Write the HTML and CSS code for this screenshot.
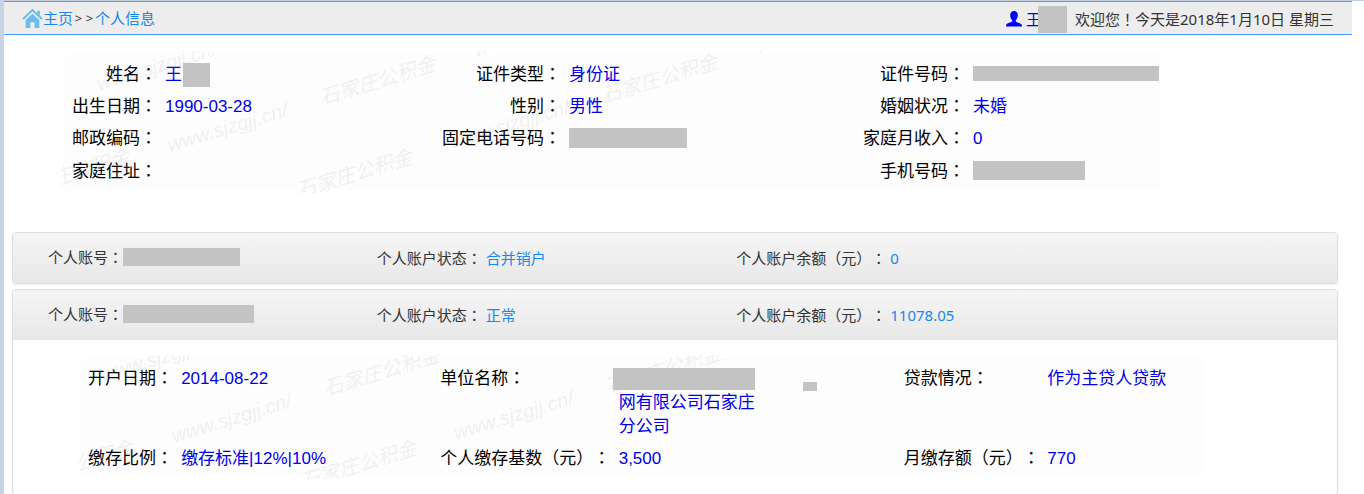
FILE: index.html
```html
<!DOCTYPE html>
<html lang="zh-CN">
<head>
    <meta charset="UTF-8">
    <meta name="viewport" content="width=device-width, initial-scale=1.0">
    <title>个人信息</title>
    <link rel="stylesheet" href="styles.css">
</head>
<body>
    <!-- watermark shared by both info tables -->
    <svg class="defs" width="0" height="0" aria-hidden="true">
        <symbol id="watermark" overflow="visible">
            <text transform="translate(38 40) rotate(-17)">www.sjzgjj.cn/</text>
            <text transform="translate(109 101) rotate(-17)">www.sjzgjj.cn/</text>
            <text transform="translate(261 54) rotate(-17)">石家庄公积金</text>
            <text transform="translate(-45 147) rotate(-17)">石家庄公积金</text>
            <text transform="translate(238 147) rotate(-17)">石家庄公积金</text>
            <text transform="translate(415 6) rotate(-17)">www.sjzgjj.cn/</text>
            <text transform="translate(391 98) rotate(-17)">www.sjzgjj.cn/</text>
            <text transform="translate(543 52) rotate(-17)">石家庄公积金</text>
            <text transform="translate(697 3) rotate(-17)">www.sjzgjj.cn/</text>
        </symbol>
    </svg>

    <div class="page">
        <header class="topbar">
            <nav class="crumbs">
                <svg class="icon-home" viewBox="0 0 20 20" aria-hidden="true">
                    <path class="house" d="M10 5.500L3.500 11.500V19H8V13.500H12V19H16.500V11.500Z"/>
                    <path class="roof" d="M1 10.500L10 2L19 10.500"/>
                    <path class="house" d="M14.500 2.500H17V7.500L14.500 5.200Z"/>
                </svg>
                <a href="#">主页</a><span class="sep">&gt;</span><span class="sep">&gt;</span><a href="#">个人信息</a>
            </nav>
            <div class="welcome">
                <a class="user" href="#">
                    <svg class="icon-user" viewBox="0 0 16 16" aria-hidden="true">
                        <path d="M8 0C5.400 0 4 1.900 4.200 4.500C4.300 6.500 5 8 6.200 9V10.500C5 11.500 1 12 .3 13.500C0 14.300 0 15 0 15.500H16C16 15 16 14.300 15.700 13.500C15 12 11 11.500 9.800 10.500V9C11 8 11.700 6.500 11.800 4.500C12 1.900 10.600 0 8 0Z"/>
                    </svg>
                    <span>王</span>
                </a>
                <span class="mask mask-user"></span>
                <span>欢迎您<i class="p" lang="zh-TW">！</i>今天是2018年1月10日 星期三</span>
            </div>
        </header>

        <section class="info person">
            <table>
                <colgroup><col class="p1"><col class="p2"><col class="p3"><col class="p2"><col class="p3"><col></colgroup>
                <tr>
                    <th scope="row">姓名<i class="p" lang="zh-TW">：</i></th>
                    <td>王<span class="mask mask-name"></span></td>
                    <th scope="row">证件类型<i class="p" lang="zh-TW">：</i></th>
                    <td>身份证</td>
                    <th scope="row">证件号码<i class="p" lang="zh-TW">：</i></th>
                    <td><span class="mask mask-id"></span></td>
                </tr>
                <tr>
                    <th scope="row">出生日期<i class="p" lang="zh-TW">：</i></th>
                    <td>1990-03-28</td>
                    <th scope="row">性别<i class="p" lang="zh-TW">：</i></th>
                    <td>男性</td>
                    <th scope="row">婚姻状况<i class="p" lang="zh-TW">：</i></th>
                    <td>未婚</td>
                </tr>
                <tr>
                    <th scope="row">邮政编码<i class="p" lang="zh-TW">：</i></th>
                    <td></td>
                    <th scope="row">固定电话号码<i class="p" lang="zh-TW">：</i></th>
                    <td><span class="mask mask-tel"></span></td>
                    <th scope="row">家庭月收入<i class="p" lang="zh-TW">：</i></th>
                    <td>0</td>
                </tr>
                <tr>
                    <th scope="row">家庭住址<i class="p" lang="zh-TW">：</i></th>
                    <td></td>
                    <th></th>
                    <td></td>
                    <th scope="row">手机号码<i class="p" lang="zh-TW">：</i></th>
                    <td><span class="mask mask-mobile"></span></td>
                </tr>
            </table>
            <svg class="watermark" aria-hidden="true"><use href="#watermark"/></svg>
        </section>

        <section class="panel">
            <div class="panel-head">
                <div>个人账号<i class="p" lang="zh-TW">：</i><span class="mask mask-acc1"></span></div>
                <div>个人账户状态<i class="p" lang="zh-TW">：</i> <b>合并销户</b></div>
                <div>个人账户余额<i class="p" lang="zh-TW">（</i>元<i class="p" lang="zh-TW">）：</i> <b>0</b></div>
            </div>
        </section>

        <section class="panel">
            <div class="panel-head">
                <div>个人账号<i class="p" lang="zh-TW">：</i><span class="mask mask-acc2"></span></div>
                <div>个人账户状态<i class="p" lang="zh-TW">：</i> <b>正常</b></div>
                <div>个人账户余额<i class="p" lang="zh-TW">（</i>元<i class="p" lang="zh-TW">）：</i> <b>11078.05</b></div>
            </div>
            <div class="info account">
                <table>
                    <colgroup><col class="a1"><col class="a2"><col class="a3"><col class="a4"><col class="a5"><col></colgroup>
                    <tr>
                        <th scope="row">开户日期<i class="p" lang="zh-TW">：</i></th>
                        <td>2014-08-22</td>
                        <th scope="row">单位名称<i class="p" lang="zh-TW">：</i></th>
                        <td><span class="mask mask-corp"></span><span class="mask mask-dot"></span><br>网有限公司石家庄<br>分公司</td>
                        <th scope="row">贷款情况<i class="p" lang="zh-TW">：</i></th>
                        <td>作为主贷人贷款</td>
                    </tr>
                    <tr>
                        <th scope="row">缴存比例<i class="p" lang="zh-TW">：</i></th>
                        <td>缴存标准|12%|10%</td>
                        <th scope="row">个人缴存基数（元）<i class="p" lang="zh-TW">：</i></th>
                        <td>3,500</td>
                        <th scope="row">月缴存额（元）<i class="p" lang="zh-TW">：</i></th>
                        <td>770</td>
                    </tr>
                </table>
                <svg class="watermark" aria-hidden="true"><use href="#watermark" x="-12" y="-13"/></svg>
            </div>
        </section>
    </div>
</body>
</html>
```

FILE: styles.css
```css
* {
    margin: 0;
    padding: 0;
    box-sizing: border-box;
}

body {
    font-family: "Noto Sans", "Noto Sans CJK SC", sans-serif;
    font-size: 15px;
    line-height: 24px;
    text-spacing-trim: space-all;
    color: #333;
    background: #fff;
}

a {
    color: #1688f0;
    text-decoration: none;
}

.defs {
    position: absolute;
}

.page {
    min-height: 100vh;
    border-top: 1px solid #c5cfe2;
    border-left: 4px solid #c9d3e6;
}

/* centred full-width punctuation */
.p {
    font-family: "Noto Sans CJK TC", sans-serif;
    font-style: normal;
    line-height: 1;
}

/* grey blocks stay above the watermark */
.mask {
    position: relative;
    z-index: 1;
    display: inline-block;
    vertical-align: middle;
    background: #c3c3c3;
}

/* top bar */
.topbar {
    display: flex;
    justify-content: space-between;
    align-items: center;
    height: 34px;
    margin-right: 12px;
    padding: 0 18px;
    background: #ededed;
    border-top: 1px solid #449ffa;
    border-bottom: 1px solid #449ffa;
}

.crumbs,
.welcome,
.user {
    display: flex;
    align-items: center;
}

.welcome {
    padding-top: 2px;
}

.icon-home {
    width: 21px;
    height: 21px;
}

.house {
    fill: #6cbcec;
}

.roof {
    fill: none;
    stroke: #6cbcec;
    stroke-width: 2;
}

.sep {
    width: 11px;
    text-align: center;
    font-size: 13px;
}

.user {
    gap: 4px;
    color: #0000f0;
}

.icon-user {
    width: 16px;
    height: 16px;
    fill: #0000ff;
}

.mask-user {
    width: 29px;
    height: 27px;
    margin: 0 8px 0 -3px;
}

/* info tables */
.info {
    position: relative;
    background: #fdfdfd;
    font-family: "Liberation Sans", "Noto Sans CJK SC", sans-serif;
    font-size: 17px;
    color: #000;
}

.info table {
    width: 100%;
    table-layout: fixed;
    border-collapse: collapse;
}

.info th {
    font-weight: normal;
    white-space: nowrap;
    vertical-align: top;
}

.info td {
    color: #0000e6;
    vertical-align: top;
    white-space: nowrap;
}

.info th,
.info td {
    height: 32px;
    padding: 4px 0;
}

.person {
    margin: 19px 204px 42px 61px;
    padding: 5px 0 2px;
}

.person th {
    text-align: right;
}

.person td {
    padding-left: 8px;
}

.p1 { width: 8.4%; }
.p2 { width: 23.5%; }
.p3 { width: 13.4%; }

.account {
    margin: 18px 134px 19px 68px;
    padding: 5px 0 1px;
}

.account th,
.account td {
    padding-left: 7px;
    text-align: left;
}

.a1 { width: 8.3%; }
.a2 { width: 23.1%; }
.a3 { width: 15.9%; }
.a4 { width: 25.4%; }
.a5 { width: 12.8%; }

.watermark {
    position: absolute;
    top: -3px;
    left: -4px;
    width: 100%;
    height: calc(100% + 6px);
    overflow: hidden;
    pointer-events: none;
    font: italic 20px "Liberation Sans", "Noto Sans CJK SC", sans-serif;
    fill: rgba(120, 120, 120, 0.11);
}

.mask-name { width: 27px; height: 24px; margin-left: 1px; vertical-align: top; }
.mask-id { width: 186px; height: 15px; margin-bottom: 4px; }
.mask-tel { width: 118px; height: 20px; margin-bottom: 4px; }
.mask-mobile { width: 112px; height: 19px; margin-bottom: 4px; }
.mask-acc1 { width: 117px; height: 18px; margin-bottom: 4px; }
.mask-acc2 { width: 131px; height: 18px; margin-bottom: 4px; }
.mask-corp { width: 142px; height: 22px; margin-left: -6px; }
.mask-dot { width: 14px; height: 9px; margin-left: 48px; vertical-align: bottom; }

/* account panels */
.panel {
    margin: 0 26px 5px 8px;
    border: 1px solid #ddd;
    border-radius: 4px;
    box-shadow: 0 1px 2px rgba(0, 0, 0, 0.08);
    overflow: hidden;
}

.panel-head {
    display: grid;
    grid-template-columns: 25.5% 27.9% 1fr;
    align-items: center;
    height: 50px;
    padding-left: 35px;
    background: linear-gradient(#f5f5f5, #e8e8e8);
}

.panel-head b {
    font-weight: normal;
    color: #1688f0;
}
```
